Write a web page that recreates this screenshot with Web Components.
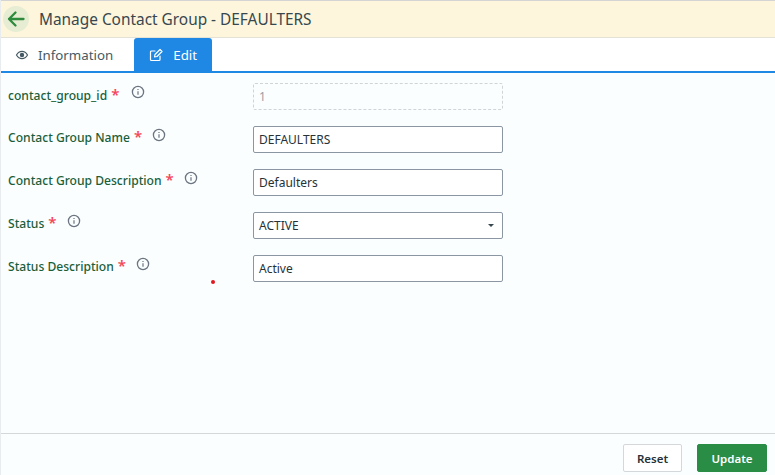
<!DOCTYPE html>
<html><head><meta charset="utf-8">
<style>
html,body{margin:0;height:100%}
body{font-family:"Noto Sans",sans-serif;background:#fafeff}
</style></head><body>
<template id="t-page"><style>
:host{display:flex;flex-direction:column;height:475px;width:775px;box-sizing:border-box;position:relative;background:#fafeff;border-left:1px solid #e8ecee;overflow:hidden}
.main{flex:1;display:flex;flex-direction:column;gap:16px;padding:10px 0 0 7px}
.dot{position:absolute;left:210px;top:280px;width:4px;height:4px;border-radius:50%;background:#e0181f}
</style><slot name="header"></slot><slot name="tabs"></slot><div class="main"><slot></slot></div><slot name="footer"></slot><div class="dot"></div></template>

<template id="t-header"><style>
:host{display:flex;align-items:center;box-sizing:border-box;height:38px;margin-left:-1px;background:#fdf6dc;border-top:1px solid #d4d4d4;border-bottom:1px solid #e4e2d6;padding-left:3px;gap:10px;color:#37474f;font-size:15.400px;font-weight:400;white-space:nowrap}
.back{width:26px;height:26px;border-radius:50%;background:#e6edd3;display:flex;align-items:center;justify-content:center}
</style><div class="back"><svg width="20" height="20" viewBox="0 0 20 20" fill="none" stroke="#2e8b3e" stroke-width="2.300" stroke-linecap="round" stroke-linejoin="round"><path d="M17.500 10H3M9.500 3.500L3 10l6.500 6.500"/></svg></div><span><slot></slot></span></template>

<template id="t-tabs"><style>
:host{display:flex;height:35px;box-sizing:border-box;border-bottom:2px solid #1f88e5;background:#fff;margin-left:-1px}
</style><slot></slot></template>

<template id="t-tab"><style>
:host{display:flex;align-items:center;box-sizing:border-box;height:33px;font-size:13.300px;color:#455a64;gap:9px;padding:0 21px 0 15px;border-radius:3px 3px 0 0}
:host([active]){background:#1f88e5;color:#fff;padding:0 15px;gap:10px}
svg{display:block}
</style><slot name="icon"></slot><span><slot></slot></span></template>

<template id="t-field"><style>
:host{display:grid;grid-template-columns:245px 250px;height:27px;color:#1b5e3a;font-size:12.100px;font-weight:500}
.l{display:flex;align-items:flex-start;white-space:nowrap;padding-top:3px;line-height:17px}
:host([first]) .l{padding-top:4px}
.s{color:#f4475a;font-size:15px;line-height:17px;margin-left:4px;font-weight:600;position:relative;top:-1px}
.i{margin-left:10px;margin-top:-1px;display:block}
:host([first]) .i{margin-top:-2px;margin-left:11.500px}
</style><div class="l"><span id="n"></span><span class="s">*</span><svg class="i" width="14" height="14" viewBox="0 0 14 14" fill="none" stroke="#6b7480"><circle cx="7" cy="7" r="5.600" stroke-width="1.300"/><path d="M7 6.300v3.400M7 4v1" stroke-width="1.200"/></svg></div><div><slot></slot></div></template>

<template id="t-input"><style>
:host{display:flex;align-items:center;box-sizing:border-box;width:250px;height:27px;border:1px solid #8a97a3;border-radius:2px;background:#fff;padding:0 5px;font-size:12px;font-weight:400;color:#263238;justify-content:space-between}
:host([disabled]){border:1px dashed #cfd4d8;background:transparent;color:#9aa0a6}
.c{width:0;height:0;border-left:3.500px solid transparent;border-right:3.500px solid transparent;border-top:3.500px solid #37474f;margin-right:3px;display:none}
:host([select]) .c{display:block}
</style><span><slot></slot></span><i class="c"></i></template>

<template id="t-footer"><style>
:host{display:flex;justify-content:flex-end;align-items:flex-start;box-sizing:border-box;height:42px;border-top:1px solid #d4d8da;padding:10px 8px 0 0;gap:15px}
</style><slot></slot></template>

<template id="t-btn"><style>
:host{display:flex;align-items:center;justify-content:center;box-sizing:border-box;height:28px;border-radius:2px;font-size:11.500px;font-weight:600;width:59px;background:#fff;border:1px solid #d5d8da;color:#263238}
:host([primary]){width:70px;background:#2a8d46;border-color:#2a8d46;color:#fff}
</style><slot></slot></template>

<cg-page>
<cg-header slot="header">Manage Contact Group - DEFAULTERS</cg-header>
<cg-tabs slot="tabs">
<cg-tab><svg slot="icon" width="14" height="14" viewBox="0 0 14 14" fill="none" stroke="#455a64" stroke-width="1.200"><path d="M1.500 7c1.400-2.400 3.200-3.600 5.500-3.600s4.100 1.200 5.500 3.600c-1.400 2.400-3.200 3.600-5.500 3.600S2.900 9.400 1.500 7z"/><circle cx="7" cy="7" r="1.600" fill="#455a64"/></svg>Information</cg-tab>
<cg-tab active><svg slot="icon" width="14" height="14" viewBox="0 0 14 14" fill="none" stroke="#fff" stroke-width="1.200" stroke-linejoin="round" stroke-linecap="round"><path d="M11 8v3.500a1 1 0 0 1-1 1H2.500a1 1 0 0 1-1-1V4a1 1 0 0 1 1-1H6"/><path d="M5.500 9l.5-2.500L11 1.500l2 2-5 5z"/></svg>Edit</cg-tab>
</cg-tabs>
<cg-field first label="contact_group_id"><cg-input disabled>1</cg-input></cg-field>
<cg-field label="Contact Group Name"><cg-input>DEFAULTERS</cg-input></cg-field>
<cg-field label="Contact Group Description"><cg-input>Defaulters</cg-input></cg-field>
<cg-field label="Status"><cg-input select>ACTIVE</cg-input></cg-field>
<cg-field label="Status Description"><cg-input>Active</cg-input></cg-field>
<cg-footer slot="footer"><cg-btn>Reset</cg-btn><cg-btn primary>Update</cg-btn></cg-footer>
</cg-page>
<script>
for (const [tag,id] of [['cg-page','t-page'],['cg-header','t-header'],['cg-tabs','t-tabs'],['cg-tab','t-tab'],['cg-input','t-input'],['cg-footer','t-footer'],['cg-btn','t-btn']]) {
  customElements.define(tag, class extends HTMLElement {
    constructor(){super();this.attachShadow({mode:'open'}).appendChild(document.getElementById(id).content.cloneNode(true));}
  });
}
customElements.define('cg-field', class extends HTMLElement {
  constructor(){super();this.attachShadow({mode:'open'}).appendChild(document.getElementById('t-field').content.cloneNode(true));}
  connectedCallback(){this.shadowRoot.getElementById('n').textContent=this.getAttribute('label');}
});
</script>
</body></html>
